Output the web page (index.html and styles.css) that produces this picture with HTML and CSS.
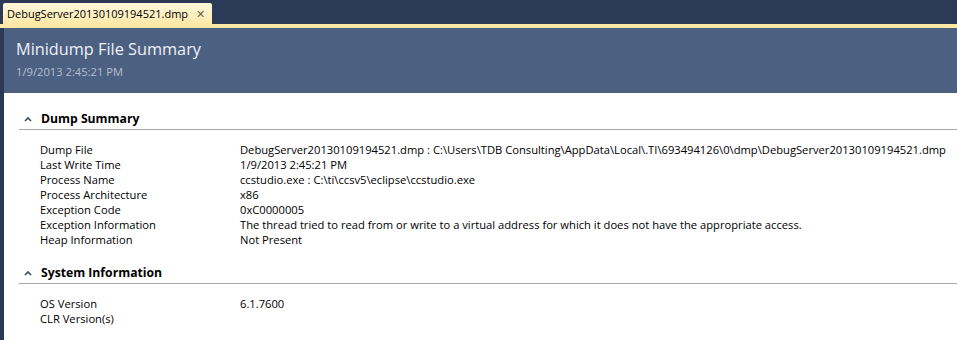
FILE: index.html
```html
<!DOCTYPE html>
<html lang="en">
  <head>
    <meta charset="UTF-8" />
    <title>Minidump File Summary</title>
    <link rel="stylesheet" href="styles.css">
  </head>
  <body>
    <div class="tabstrip">
      <div class="tab">
        <span class="tab-name">DebugServer20130109194521.dmp</span>
        <span class="tab-close">&#x2715;</span>
      </div>
    </div>
    <div class="tab-rule"></div>

    <div class="document">
      <div class="header">
        <h1>Minidump File Summary</h1>
        <p>1/9/2013 2:45:21 PM</p>
      </div>

      <div class="section">
        <div class="section-title">
          <svg class="chevron" width="8" height="6" viewBox="0 0 8 6">
            <polyline points="1,5 4,2 7,5" fill="none" stroke="#3c4a60" stroke-width="1.6" />
          </svg>
          <span>Dump Summary</span>
        </div>
        <div class="rows">
          <div class="row"><span class="label">Dump File</span><span class="value">DebugServer20130109194521.dmp : C:\Users\TDB Consulting\AppData\Local\.TI\693494126\0\dmp\DebugServer20130109194521.dmp</span></div>
          <div class="row"><span class="label">Last Write Time</span><span class="value">1/9/2013 2:45:21 PM</span></div>
          <div class="row"><span class="label">Process Name</span><span class="value">ccstudio.exe : C:\ti\ccsv5\eclipse\ccstudio.exe</span></div>
          <div class="row"><span class="label">Process Architecture</span><span class="value">x86</span></div>
          <div class="row"><span class="label">Exception Code</span><span class="value">0xC0000005</span></div>
          <div class="row"><span class="label">Exception Information</span><span class="value">The thread tried to read from or write to a virtual address for which it does not have the appropriate access.</span></div>
          <div class="row"><span class="label">Heap Information</span><span class="value">Not Present</span></div>
        </div>
      </div>

      <div class="section">
        <div class="section-title">
          <svg class="chevron" width="8" height="6" viewBox="0 0 8 6">
            <polyline points="1,5 4,2 7,5" fill="none" stroke="#3c4a60" stroke-width="1.6" />
          </svg>
          <span>System Information</span>
        </div>
        <div class="rows">
          <div class="row"><span class="label">OS Version</span><span class="value">6.1.7600</span></div>
          <div class="row"><span class="label">CLR Version(s)</span><span class="value"></span></div>
        </div>
      </div>
    </div>
  </body>
</html>
```

FILE: styles.css
```css
* {
  margin: 0;
  padding: 0;
  box-sizing: border-box;
}

body {
  height: 340px;
  overflow: hidden;
  background-color: #2b3a57;
  font-family: "Open Sans", "Noto Sans", sans-serif;
  font-size: 11.2px;
  color: #000;
}

.tabstrip {
  height: 24px;
  padding: 3px 0 0 3px;
}

.tab {
  display: flex;
  align-items: center;
  width: 209px;
  height: 21px;
  padding: 0 0 0 4px;
  background: linear-gradient(#fdf6dc, #fff0c0 60%, #ffe8a6);
  border-radius: 2px 2px 0 0;
}

.tab-name {
  flex: 1;
  font-size: 11px;
  color: #000;
}

.tab-close {
  flex: none;
  width: 16px;
  color: #6b6654;
  font-size: 11px;
}

.tab-rule {
  height: 4px;
  background-color: #ffe8a6;
}

.document {
  margin-left: 4px;
  height: 312px;
  background-color: #fff;
}

.header {
  height: 65px;
  padding: 9px 12px 0;
  background-color: #4c6082;
}

.header h1 {
  font-size: 16.3px;
  font-weight: normal;
  color: #eef1f6;
  line-height: 24px;
}

.header p {
  margin-top: 3px;
  color: #b4bfd2;
  line-height: 16px;
}

.section {
  padding-left: 15px;
}

.section-title {
  display: flex;
  align-items: center;
  gap: 9px;
  height: 37px;
  padding: 15px 0 0 5px;
  border-bottom: 1px solid #a3a8b0;
  font-size: 12.2px;
  font-weight: bold;
}

.rows {
  padding: 12px 0 0 21px;
}

.row {
  display: flex;
  line-height: 15px;
  white-space: nowrap;
}

.label {
  flex: none;
  width: 200px;
}
```
